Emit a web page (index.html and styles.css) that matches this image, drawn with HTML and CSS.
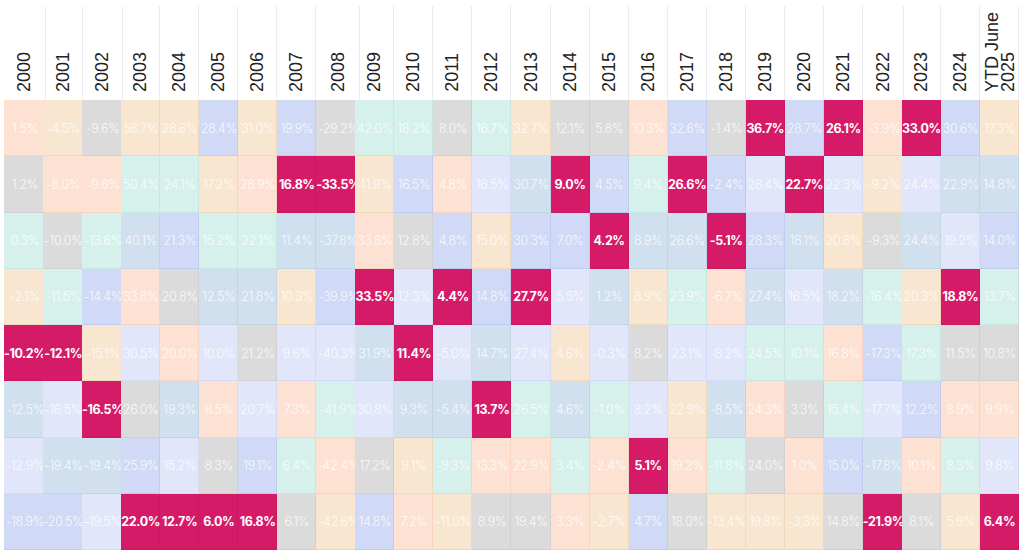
FILE: index.html
```html
<!DOCTYPE html>
<html lang="en">
<head>
<meta charset="utf-8">
<title>Asset class returns</title>
<link rel="stylesheet" href="styles.css">
</head>
<body>
<div class="chart">
  <div class="col"><div class="yr"><span>2000</span></div><div class="cell p">1.5%</div><div class="cell g">1.2%</div><div class="cell m">0.3%</div><div class="cell b">-2.1%</div><div class="cell h">-10.2%</div><div class="cell s">-12.5%</div><div class="cell l">-12.9%</div><div class="cell d">-18.9%</div></div>
  <div class="col"><div class="yr"><span>2001</span></div><div class="cell b">-4.5%</div><div class="cell p">-8.0%</div><div class="cell g">-10.0%</div><div class="cell m">-11.5%</div><div class="cell h">-12.1%</div><div class="cell l">-16.5%</div><div class="cell s">-19.4%</div><div class="cell d">-20.5%</div></div>
  <div class="col"><div class="yr"><span>2002</span></div><div class="cell g">-9.6%</div><div class="cell p">-9.8%</div><div class="cell m">-13.6%</div><div class="cell d">-14.4%</div><div class="cell b">-15.1%</div><div class="cell h">-16.5%</div><div class="cell s">-19.4%</div><div class="cell l">-19.5%</div></div>
  <div class="col"><div class="yr"><span>2003</span></div><div class="cell b">56.7%</div><div class="cell m">50.4%</div><div class="cell s">40.1%</div><div class="cell p">33.8%</div><div class="cell l">30.5%</div><div class="cell g">26.0%</div><div class="cell d">25.9%</div><div class="cell h">22.0%</div></div>
  <div class="col"><div class="yr"><span>2004</span></div><div class="cell b">28.6%</div><div class="cell m">24.1%</div><div class="cell d">21.3%</div><div class="cell g">20.8%</div><div class="cell p">20.0%</div><div class="cell s">19.3%</div><div class="cell l">15.2%</div><div class="cell h">12.7%</div></div>
  <div class="col"><div class="yr"><span>2005</span></div><div class="cell d">28.4%</div><div class="cell b">17.2%</div><div class="cell m">15.2%</div><div class="cell s">12.5%</div><div class="cell l">10.0%</div><div class="cell p">8.5%</div><div class="cell g">8.3%</div><div class="cell h">6.0%</div></div>
  <div class="col"><div class="yr"><span>2006</span></div><div class="cell b">31.0%</div><div class="cell p">28.9%</div><div class="cell m">22.1%</div><div class="cell s">21.8%</div><div class="cell g">21.2%</div><div class="cell l">20.7%</div><div class="cell d">19.1%</div><div class="cell h">16.8%</div></div>
  <div class="col"><div class="yr"><span>2007</span></div><div class="cell d">19.9%</div><div class="cell h">16.8%</div><div class="cell s">11.4%</div><div class="cell b">10.3%</div><div class="cell l">9.6%</div><div class="cell p">7.3%</div><div class="cell m">6.4%</div><div class="cell g">6.1%</div></div>
  <div class="col"><div class="yr"><span>2008</span></div><div class="cell g">-29.2%</div><div class="cell h">-33.5%</div><div class="cell s">-37.8%</div><div class="cell d">-39.9%</div><div class="cell l">-40.3%</div><div class="cell m">-41.9%</div><div class="cell p">-42.4%</div><div class="cell b">-42.6%</div></div>
  <div class="col"><div class="yr"><span>2009</span></div><div class="cell m">42.0%</div><div class="cell b">41.9%</div><div class="cell p">33.8%</div><div class="cell h">33.5%</div><div class="cell s">31.9%</div><div class="cell l">30.8%</div><div class="cell g">17.2%</div><div class="cell d">14.8%</div></div>
  <div class="col"><div class="yr"><span>2010</span></div><div class="cell m">18.2%</div><div class="cell d">16.5%</div><div class="cell g">12.8%</div><div class="cell l">12.3%</div><div class="cell h">11.4%</div><div class="cell s">9.3%</div><div class="cell b">9.1%</div><div class="cell p">7.2%</div></div>
  <div class="col"><div class="yr"><span>2011</span></div><div class="cell g">8.0%</div><div class="cell p">4.8%</div><div class="cell d">4.8%</div><div class="cell h">4.4%</div><div class="cell l">-5.0%</div><div class="cell s">-5.4%</div><div class="cell m">-9.3%</div><div class="cell b">-11.0%</div></div>
  <div class="col"><div class="yr"><span>2012</span></div><div class="cell m">16.7%</div><div class="cell l">16.5%</div><div class="cell b">15.0%</div><div class="cell d">14.8%</div><div class="cell s">14.7%</div><div class="cell h">13.7%</div><div class="cell p">13.3%</div><div class="cell g">8.9%</div></div>
  <div class="col"><div class="yr"><span>2013</span></div><div class="cell b">32.7%</div><div class="cell s">30.7%</div><div class="cell d">30.3%</div><div class="cell h">27.7%</div><div class="cell l">27.4%</div><div class="cell m">26.5%</div><div class="cell p">22.9%</div><div class="cell g">19.4%</div></div>
  <div class="col"><div class="yr"><span>2014</span></div><div class="cell g">12.1%</div><div class="cell h">9.0%</div><div class="cell d">7.0%</div><div class="cell l">5.5%</div><div class="cell b">4.6%</div><div class="cell s">4.6%</div><div class="cell m">3.4%</div><div class="cell p">3.3%</div></div>
  <div class="col"><div class="yr"><span>2015</span></div><div class="cell g">5.8%</div><div class="cell d">4.5%</div><div class="cell h">4.2%</div><div class="cell s">1.2%</div><div class="cell l">-0.3%</div><div class="cell m">-1.0%</div><div class="cell p">-2.4%</div><div class="cell b">-2.7%</div></div>
  <div class="col"><div class="yr"><span>2016</span></div><div class="cell p">10.3%</div><div class="cell m">9.4%</div><div class="cell s">8.9%</div><div class="cell b">8.9%</div><div class="cell g">8.2%</div><div class="cell l">8.2%</div><div class="cell h">5.1%</div><div class="cell d">4.7%</div></div>
  <div class="col"><div class="yr"><span>2017</span></div><div class="cell d">32.6%</div><div class="cell h">26.6%</div><div class="cell s">26.6%</div><div class="cell m">23.9%</div><div class="cell l">23.1%</div><div class="cell b">22.9%</div><div class="cell p">19.2%</div><div class="cell g">18.0%</div></div>
  <div class="col"><div class="yr"><span>2018</span></div><div class="cell g">-1.4%</div><div class="cell d">-2.4%</div><div class="cell h">-5.1%</div><div class="cell p">-6.7%</div><div class="cell l">-8.2%</div><div class="cell s">-8.5%</div><div class="cell m">-11.8%</div><div class="cell b">-13.4%</div></div>
  <div class="col"><div class="yr"><span>2019</span></div><div class="cell h">36.7%</div><div class="cell l">28.4%</div><div class="cell d">28.3%</div><div class="cell s">27.4%</div><div class="cell m">24.5%</div><div class="cell p">24.3%</div><div class="cell g">24.0%</div><div class="cell b">19.8%</div></div>
  <div class="col"><div class="yr"><span>2020</span></div><div class="cell d">28.7%</div><div class="cell h">22.7%</div><div class="cell s">18.1%</div><div class="cell l">16.5%</div><div class="cell m">10.1%</div><div class="cell g">3.3%</div><div class="cell p">1.0%</div><div class="cell b">-3.3%</div></div>
  <div class="col"><div class="yr"><span>2021</span></div><div class="cell h">26.1%</div><div class="cell l">22.3%</div><div class="cell b">20.8%</div><div class="cell s">18.2%</div><div class="cell p">16.8%</div><div class="cell m">15.4%</div><div class="cell d">15.0%</div><div class="cell g">14.8%</div></div>
  <div class="col"><div class="yr"><span>2022</span></div><div class="cell p">-3.9%</div><div class="cell b">-9.2%</div><div class="cell g">-9.3%</div><div class="cell m">-16.4%</div><div class="cell d">-17.3%</div><div class="cell l">-17.7%</div><div class="cell s">-17.8%</div><div class="cell h">-21.9%</div></div>
  <div class="col"><div class="yr"><span>2023</span></div><div class="cell h">33.0%</div><div class="cell l">24.4%</div><div class="cell s">24.4%</div><div class="cell b">20.3%</div><div class="cell m">17.3%</div><div class="cell d">12.2%</div><div class="cell p">10.1%</div><div class="cell g">8.1%</div></div>
  <div class="col"><div class="yr"><span>2024</span></div><div class="cell d">30.6%</div><div class="cell s">22.9%</div><div class="cell l">19.2%</div><div class="cell h">18.8%</div><div class="cell g">11.5%</div><div class="cell p">8.9%</div><div class="cell m">8.3%</div><div class="cell b">5.9%</div></div>
  <div class="col"><div class="yr yr-two"><span>YTD June<br>2025</span></div><div class="cell b">17.3%</div><div class="cell s">14.8%</div><div class="cell d">14.0%</div><div class="cell m">13.7%</div><div class="cell g">10.8%</div><div class="cell p">9.9%</div><div class="cell l">9.8%</div><div class="cell h">6.4%</div></div>
</div>
</body>
</html>
```
FILE: styles.css
```css
html, body {
  margin: 0;
  padding: 0;
  background: #ffffff;
}

.chart {
  width: 1015px;
  height: 544px;
  margin: 6px 0 0 4px;
  display: grid;
  grid-template-columns: repeat(26, 1fr);
}

.col {
  display: grid;
  grid-template-rows: 94px repeat(8, 1fr);
  min-width: 0;
}

.yr {
  display: flex;
  justify-content: center;
  align-items: flex-end;
  padding-bottom: 8px;
  border-right: 1px solid #ececec;
  font-family: "Liberation Sans", Arial, sans-serif;
  font-size: 18px;
  color: #222222;
}

.yr span {
  writing-mode: vertical-rl;
  transform: rotate(180deg);
  line-height: 20px;
  white-space: nowrap;
}

.yr-two {
  padding-left: 2px;
}

.yr-two span {
  line-height: 16px;
}

.cell {
  display: flex;
  align-items: center;
  justify-content: center;
  font-family: Inter, "Noto Sans", sans-serif;
  font-size: 12.5px;
  font-weight: 300;
  letter-spacing: -0.4px;
  color: rgba(255, 255, 255, 0.85);
  white-space: nowrap;
  overflow: visible;
  box-shadow: inset -1px -1px 0 var(--edge);
}

.p { background: #fde2d4; --edge: #f8d3c0; }
.b { background: #f8e6d0; --edge: #f1d9bb; }
.g { background: #dbdbdb; --edge: #d0d0d0; }
.d { background: #d0d9f5; --edge: #bfcbf0; }
.m { background: #d6f1ec; --edge: #c6e8e1; }
.l { background: #e2e6fa; --edge: #d5dbf6; }
.s { background: #d0e0ee; --edge: #c2d5e6; }
.h {
  background: #d51b67;
  --edge: #c9195f;
  color: #ffffff;
  font-weight: 700;
}
```
